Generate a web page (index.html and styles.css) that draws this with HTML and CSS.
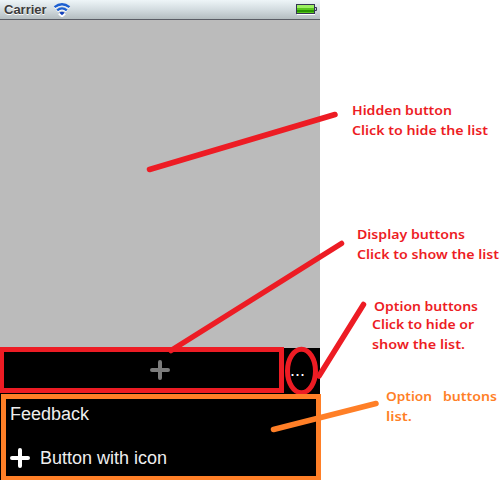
FILE: index.html
```html
<!DOCTYPE html>
<html lang="en">
<head>
<meta charset="utf-8">
<title>Option buttons</title>
<link rel="stylesheet" href="styles.css">
</head>
<body>
<main class="phone">
  <header class="status">
    <span class="carrier">Carrier</span>
    <svg class="wifi" width="18" height="14" viewBox="0 0 18 14">
      <path d="M1.500 5Q9 -1.500 16.500 5M4.200 8.300Q9 4 13.800 8.300M6 10.500L9 13L12 10.500" fill="none" stroke="#fff" stroke-width="2.500"/>
      <path d="M1.500 4.200Q9 -1.700 16.500 4.200M4.200 7.400Q9 3.400 13.800 7.400" fill="none" stroke="#1c5fd0" stroke-width="2.300"/>
      <path d="M6.300 9.800Q9 7.800 11.700 9.800L9 12.300Z" fill="#1440bb"/>
    </svg>
    <svg class="battery" width="22" height="11" viewBox="0 0 22 11">
      <path d="M1 10.500H19" stroke="#fff"/>
      <rect x=".5" y=".5" width="18" height="9" fill="#57c51d" stroke="#343553"/>
      <path d="M1 2.500H18" stroke="#9cef62" stroke-width="3"/>
      <path d="M1 7H18" stroke="#279500" stroke-width="2"/>
      <path d="M19 3.500H20.500V6.500H19" fill="#c5cbd0" stroke="#343553"/>
    </svg>
  </header>
  <section class="content"></section>
  <nav class="toolbar">
    <svg class="plus dim" width="20" height="20" viewBox="0 0 20 20"><path d="M10 2V18M2 10H18"/></svg>
    <span class="more">...</span>
  </nav>
  <section class="options">
    <div class="option">Feedback</div>
    <div class="option"><svg class="plus" width="20" height="20" viewBox="0 0 20 20"><path d="M10 2V18M2 10H18"/></svg><span>Button with icon</span></div>
  </section>
</main>
<svg class="notes" width="504" height="480" viewBox="0 0 504 480">
  <g class="red">
    <path d="M149.500 169.500L335 114.500M171 350.500L341.500 243.500M319 376L363.500 304.500"/>
    <rect x="1.500" y="349.500" width="280" height="41"/>
    <ellipse cx="301.500" cy="371" rx="14" ry="21.700"/>
  </g>
  <g class="orange">
    <rect x="3.500" y="396.500" width="315" height="82"/>
    <path d="M273.500 429.500L376 403.500"/>
  </g>
  <g class="label">
    <text x="352" y="115" textLength="100" lengthAdjust="spacingAndGlyphs">Hidden button</text>
    <text x="352" y="135" textLength="136" lengthAdjust="spacingAndGlyphs">Click to hide the list</text>
    <text x="357" y="239" textLength="108" lengthAdjust="spacingAndGlyphs">Display buttons</text>
    <text x="357" y="259" textLength="142" lengthAdjust="spacingAndGlyphs">Click to show the list</text>
    <text x="374" y="311" textLength="104" lengthAdjust="spacingAndGlyphs">Option buttons</text>
    <text x="372" y="329" textLength="102" lengthAdjust="spacingAndGlyphs">Click to hide or</text>
    <text x="372" y="349" textLength="93" lengthAdjust="spacingAndGlyphs">show the list.</text>
  </g>
  <g class="label accent">
    <text x="386" y="401" textLength="46" lengthAdjust="spacingAndGlyphs">Option</text>
    <text x="443" y="401" textLength="54" lengthAdjust="spacingAndGlyphs">buttons</text>
    <text x="386" y="421" textLength="26" lengthAdjust="spacingAndGlyphs">list.</text>
  </g>
</svg>
</body>
</html>
```
FILE: styles.css
```css
body {
  margin: 0;
  width: 504px;
  height: 480px;
  overflow: hidden;
  background: #fff;
  font-family: "Liberation Sans", Arial, sans-serif;
}
.phone {
  display: flex;
  flex-direction: column;
  width: 320px;
  height: 480px;
  background: #000;
}
.status {
  display: flex;
  align-items: center;
  box-sizing: border-box;
  height: 20px;
  padding: 0 2px 0 4px;
  background: linear-gradient(#eef5f8, #d3dce0 50%, #b4bdc0);
  border-bottom: 1px solid #5a5d65;
}
.carrier {
  width: 49px;
  font-size: 13px;
  font-weight: bold;
  color: #3c3c3c;
  text-shadow: 0 1px #fff;
}
.wifi { margin-top: 1px; }
.battery { margin-left: auto; }
.content {
  height: 328px;
  background: #bbb;
}
.toolbar {
  display: flex;
  align-items: center;
  height: 44px;
  padding-left: 150px;
}
.plus {
  fill: none;
  stroke: #fff;
  stroke-width: 4;
  stroke-linecap: round;
}
.dim { stroke: #7c7c7c; }
.more {
  margin-left: 120px;
  color: #fff;
  font-size: 18px;
  line-height: 20px;
}
.options {
  display: flex;
  flex-direction: column;
  height: 88px;
  color: #eee;
  font-size: 18px;
}
.option {
  display: flex;
  align-items: center;
  gap: 10px;
  height: 44px;
  padding-left: 10px;
}
.notes {
  position: absolute;
  top: 0;
  left: 0;
}
.red, .orange {
  fill: none;
  stroke: #ed1c24;
  stroke-width: 5;
  stroke-linecap: round;
}
.red path, .orange path { stroke-width: 5.5; }
.orange { stroke: #ff7f27; }
.label {
  fill: #ed1c24;
  font: 600 13px "Noto Sans", "DejaVu Sans", sans-serif;
}
.accent { fill: #ff7f27; }
```
